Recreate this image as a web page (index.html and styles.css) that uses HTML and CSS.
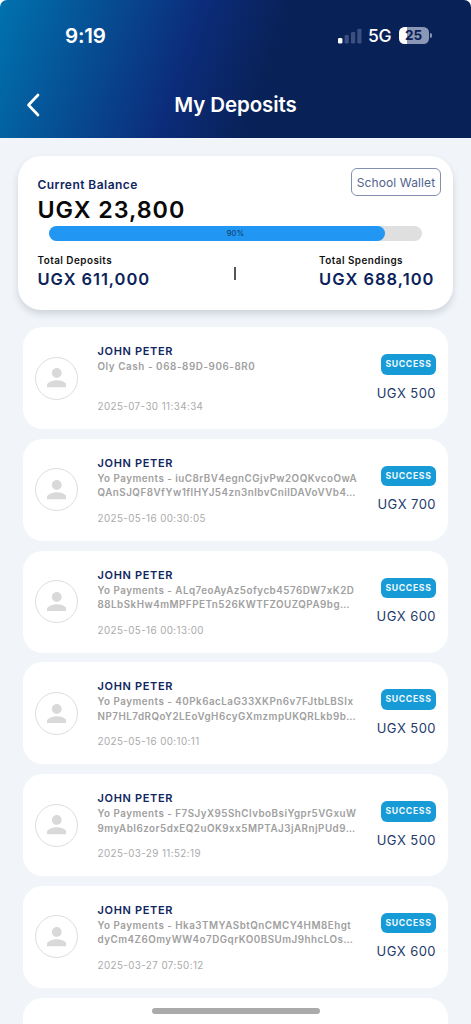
FILE: index.html
```html
<!DOCTYPE html>
<html lang="en">
<head>
<meta charset="utf-8">
<title>My Deposits</title>
<link rel="stylesheet" href="styles.css">
</head>
<body>
<svg class="defs" width="0" height="0"><symbol id="person" viewBox="4 4 16 16"><path d="M12 12c2.21 0 4-1.79 4-4s-1.79-4-4-4-4 1.79-4 4 1.79 4 4 4zm0 2c-2.67 0-8 1.34-8 4v2h16v-2c0-2.66-5.33-4-8-4z"/></symbol></svg>
<div class="corners">
<header class="header">
  <div class="status">
    <span class="clock">9:19</span>
    <div class="indicators">
      <svg class="signal" width="24" height="16" viewBox="0 0 24 16"><rect x="0" y="10" width="4.4" height="5.6" rx="1.3" fill="#fff"/><g fill="#3b4f80"><rect x="6.6" y="7" width="4.2" height="8.6" rx="1.3"/><rect x="13" y="4" width="4.2" height="11.6" rx="1.3"/><rect x="19.3" y="0.8" width="4.2" height="14.8" rx="1.3"/></g></svg>
      <span class="network">5G</span>
      <div class="battery"><span class="level">25</span><i class="tip"></i></div>
    </div>
  </div>
  <div class="nav">
    <svg class="back" width="16" height="24" viewBox="0 0 16 24"><path d="M13 2 3.500 12l9.500 10" fill="none" stroke="#fff" stroke-width="2.7" stroke-linecap="round" stroke-linejoin="round"/></svg>
    <h1 class="title">My Deposits</h1>
  </div>
</header>
</div>
<main class="content">
  <section class="balance">
    <div class="balance-top">
      <div><div class="label">Current Balance</div><div class="amount">UGX 23,800</div></div>
      <div class="wallet">School Wallet</div>
    </div>
    <div class="track"><div class="fill" style="width:90%"></div><span class="percent">90%</span></div>
    <div class="totals">
      <div><div class="total-label">Total Deposits</div><div class="total-value">UGX 611,000</div></div>
      <i class="divider"></i>
      <div class="spend"><div class="total-label">Total Spendings</div><div class="total-value">UGX 688,100</div></div>
    </div>
  </section>
  <div class="list">
    <article class="item"><div class="avatar"><svg class="person"><use href="#person"/></svg></div><div class="info"><div class="name">JOHN PETER</div><div class="ref digits">Oly Cash - 068-89D-906-8R0</div><div class="date">2025-07-30 11:34:34</div></div><div class="side"><span class="badge">SUCCESS</span><span class="sum">UGX 500</span></div></article>
    <article class="item"><div class="avatar"><svg class="person"><use href="#person"/></svg></div><div class="info"><div class="name">JOHN PETER</div><div class="ref">Yo Payments - iuC8rBV4egnCGjvPw2OQKvcoOwA<br>QAnSJQF8VfYw1flHYJ54zn3nlbvCnilDAVoVVb4…</div><div class="date">2025-05-16 00:30:05</div></div><div class="side"><span class="badge">SUCCESS</span><span class="sum">UGX 700</span></div></article>
    <article class="item"><div class="avatar"><svg class="person"><use href="#person"/></svg></div><div class="info"><div class="name">JOHN PETER</div><div class="ref">Yo Payments - ALq7eoAyAz5ofycb4576DW7xK2D<br>88LbSkHw4mMPFPETn526KWTFZOUZQPA9bg…</div><div class="date">2025-05-16 00:13:00</div></div><div class="side"><span class="badge">SUCCESS</span><span class="sum">UGX 600</span></div></article>
    <article class="item"><div class="avatar"><svg class="person"><use href="#person"/></svg></div><div class="info"><div class="name">JOHN PETER</div><div class="ref">Yo Payments - 40Pk6acLaG33XKPn6v7FJtbLBSIx<br>NP7HL7dRQoY2LEoVgH6cyGXmzmpUKQRLkb9b…</div><div class="date">2025-05-16 00:10:11</div></div><div class="side"><span class="badge">SUCCESS</span><span class="sum">UGX 500</span></div></article>
    <article class="item"><div class="avatar"><svg class="person"><use href="#person"/></svg></div><div class="info"><div class="name">JOHN PETER</div><div class="ref">Yo Payments - F7SJyX95ShClvboBsiYgpr5VGxuW<br>9myAbI6zor5dxEQ2uOK9xx5MPTAJ3jARnjPUd9…</div><div class="date">2025-03-29 11:52:19</div></div><div class="side"><span class="badge">SUCCESS</span><span class="sum">UGX 500</span></div></article>
    <article class="item"><div class="avatar"><svg class="person"><use href="#person"/></svg></div><div class="info"><div class="name">JOHN PETER</div><div class="ref">Yo Payments - Hka3TMYASbtQnCMCY4HM8Ehgt<br>dyCm4Z6OmyWW4o7DGqrKO0BSUmJ9hhcLOs…</div><div class="date">2025-03-27 07:50:12</div></div><div class="side"><span class="badge">SUCCESS</span><span class="sum">UGX 600</span></div></article>
    <article class="item last"></article>
  </div>
</main>
<div class="home"></div>
</body>
</html>
```
FILE: styles.css
```css
* { box-sizing: border-box; }
body { margin: 0; height: 1024px; overflow: hidden; position: relative; background: #f1f5f9; font-family: Inter, "Liberation Sans", sans-serif; }
.defs { position: absolute; }
.corners { background: #fff; }
.header { height: 138px; border-radius: 7px 7px 0 0; color: #fff; background: linear-gradient(109deg, #0072ae 0%, #0c2c7a 39.5%, #082156 57%, #082156 100%); }
.status { display: flex; justify-content: space-between; padding: 22px 42px 0 65px; height: 71px; }
.clock { font-size: 20.5px; font-weight: 600; line-height: 27px; letter-spacing: -0.2px; }
.indicators { display: flex; align-items: center; height: 27px; }
.network { font-size: 17.5px; font-weight: 500; margin-left: 6px; width: 31px; letter-spacing: -0.4px; }
.battery { position: relative; width: 30px; height: 17px; border-radius: 5.5px; background: linear-gradient(90deg, #fff 26%, #8b98b5 26%); color: #082156; text-align: center; }
.level { display: block; font-size: 13.5px; font-weight: 700; line-height: 17px; margin-right: 1px; }
.tip { position: absolute; left: 31px; top: 6px; width: 2px; height: 5px; border-radius: 0 2px 2px 0; background: #8b98b5; }
.nav { display: grid; grid-template-columns: 24px 1fr 24px; align-items: center; padding: 0 24px; height: 68px; }
.back { margin-left: 1px; }
.title { margin: 0; text-align: center; font-size: 20.5px; font-weight: 600; letter-spacing: -0.1px; line-height: 28px; }
.content { padding: 18px 18px 0; }
.balance { height: 154px; border-radius: 23px; background: #fff; box-shadow: 0 4px 7px rgba(30, 45, 70, .16); padding: 12px 12px 0 19.5px; }
.balance-top { display: flex; justify-content: space-between; align-items: flex-start; height: 58px; }
.label { padding-top: 8px; font-size: 12px; font-weight: 600; line-height: 17px; letter-spacing: .45px; color: #10265f; }
.amount { font-size: 23.3px; font-weight: 600; line-height: 31px; letter-spacing: .95px; color: #080808; padding-top: 1px; }
.wallet { width: 90px; height: 28px; border: 1px solid #8290b1; border-radius: 6px; font-size: 12px; line-height: 28px; text-align: center; letter-spacing: .12px; color: #51638d; white-space: nowrap; }
.track { position: relative; width: 373px; height: 15px; margin-left: 11.5px; border-radius: 8px; background: #dfdfdf; }
.fill { height: 15px; border-radius: 8px; background: #2196f3; }
.percent { position: absolute; inset: 0; text-align: center; font-size: 7.5px; line-height: 15px; letter-spacing: .3px; color: #12395b; }
.totals { display: flex; justify-content: space-between; padding: 12px 6.5px 0 0; }
.total-label { font-size: 9.9px; font-weight: 600; line-height: 14px; letter-spacing: .47px; color: #111; }
.spend .total-label { margin-left: -1px; }
.total-value { font-size: 16.5px; font-weight: 600; line-height: 24px; letter-spacing: .93px; color: #0b225a; }
.spend .total-value { margin-left: -1px; letter-spacing: 1.02px; }
.divider { width: 1.5px; height: 13px; margin-top: 13.5px; background: #555; }
.list { display: flex; flex-direction: column; gap: 9.8px; padding: 17px 5px 0; }
.item { display: flex; flex: none; height: 102px; padding: 0 12px; border-radius: 20px; background: #fff; }
.item.last { height: 26.2px; border-radius: 20px 20px 0 0; }
.avatar { display: flex; justify-content: center; align-items: center; width: 43px; height: 43px; margin-top: 29.5px; border: 1.5px solid #ddd; border-radius: 50%; }
.person { width: 19.5px; height: 19.5px; fill: #d9d9d9; }
.info { width: 270px; padding: 16px 0 0 19.5px; white-space: nowrap; }
.name { font-size: 11px; font-weight: 600; line-height: 16px; letter-spacing: .67px; color: #10265f; }
.ref { height: 40px; padding-top: 1px; font-size: 9.8px; font-weight: 600; line-height: 14.4px; letter-spacing: .5px; color: #a0a0a0; }
.ref.digits { letter-spacing: .59px; }
.date { font-size: 9.8px; line-height: 15px; letter-spacing: .42px; color: #aaa; }
.side { display: flex; flex-direction: column; align-items: flex-end; flex: 1; padding-top: 27px; }
.badge { width: 55px; height: 20.5px; border-radius: 6px; background: #169bd7; color: #eef8fd; font-size: 8.7px; font-weight: 700; line-height: 21px; letter-spacing: .65px; text-align: center; }
.sum { margin-top: 8px; font-size: 13px; line-height: 21px; letter-spacing: .45px; color: #243b6b; white-space: nowrap; }
.home { position: absolute; left: 152px; bottom: 10px; width: 168px; height: 6px; border-radius: 3px; background: #aaa; }
```
